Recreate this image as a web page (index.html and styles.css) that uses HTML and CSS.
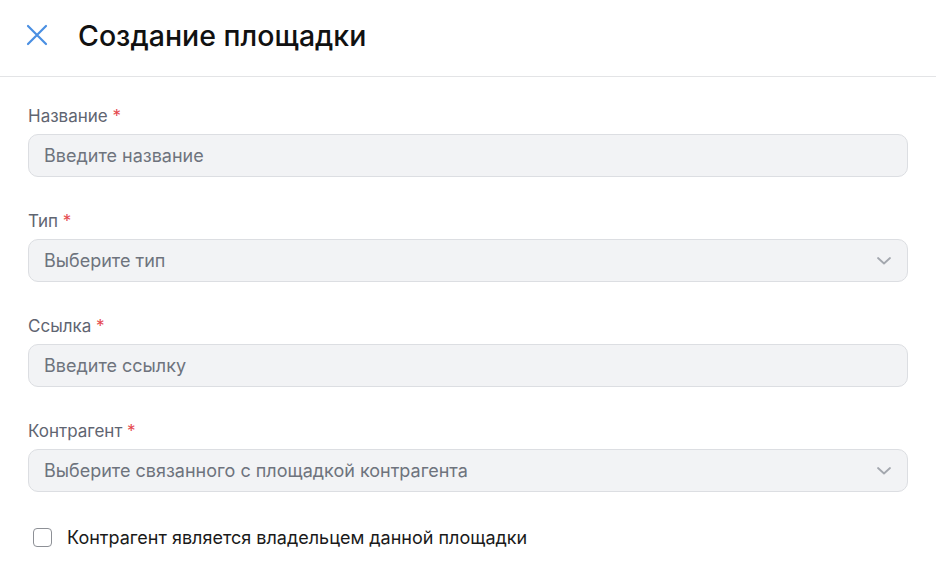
FILE: index.html
```html
<!DOCTYPE html>
<html lang="ru">
<head>
<meta charset="utf-8">
<link rel="stylesheet" href="styles.css">
</head>
<body>
<div class="page">
  <header class="header">
    <button class="close" aria-label="Закрыть">
      <svg width="22" height="22" viewBox="0 0 22 22"><path d="M2 2 L20 20 M20 2 L2 20" stroke="#4a8fe2" stroke-width="2.2" stroke-linecap="round" fill="none"/></svg>
    </button>
    <h1 class="title">Создание площадки</h1>
  </header>
  <main class="form">
    <div class="field">
      <label class="label">Название <span class="req">*</span></label>
      <div class="input"><span class="ph">Введите название</span></div>
    </div>
    <div class="field">
      <label class="label">Тип <span class="req">*</span></label>
      <div class="input select"><span class="ph">Выберите тип</span>
        <svg class="chev" width="16" height="10" viewBox="0 0 16 10"><path d="M2 2 L8 7.5 L14 2" stroke="#a3a7ae" stroke-width="1.8" fill="none" stroke-linecap="round" stroke-linejoin="round"/></svg>
      </div>
    </div>
    <div class="field">
      <label class="label">Ссылка <span class="req">*</span></label>
      <div class="input"><span class="ph">Введите ссылку</span></div>
    </div>
    <div class="field">
      <label class="label">Контрагент <span class="req">*</span></label>
      <div class="input select"><span class="ph">Выберите связанного с площадкой контрагента</span>
        <svg class="chev" width="16" height="10" viewBox="0 0 16 10"><path d="M2 2 L8 7.5 L14 2" stroke="#a3a7ae" stroke-width="1.8" fill="none" stroke-linecap="round" stroke-linejoin="round"/></svg>
      </div>
    </div>
    <label class="check">
      <span class="box"></span>
      <span class="check-text">Контрагент является владельцем данной площадки</span>
    </label>
  </main>
</div>
</body>
</html>
```
FILE: styles.css
```css
* { box-sizing: border-box; }
html, body { margin: 0; padding: 0; background: #fff; }
body { font-family: Inter, "Noto Sans", sans-serif; color: #111; }
.page { width: 936px; height: 586px; overflow: hidden; }
.header {
  height: 77px;
  border-bottom: 1px solid #e3e4e6;
  display: flex;
  align-items: center;
  padding: 0 0 6px 26px;
}
.close { background: none; border: 0; padding: 0; margin: 0; width: 22px; height: 22px; display: flex; }
.title { margin: 0 0 0 30px; font-size: 28.5px; font-weight: 500; letter-spacing: 0; color: #111; }
.form { padding: 29px 28px 0 28px; display: flex; flex-direction: column; }
.field { display: flex; flex-direction: column; margin-bottom: 34px; }
.label { font-size: 17px; line-height: 21px; color: #5f6571; margin-bottom: 7px; }
.req { color: #e5484d; }
.input {
  height: 43px;
  background: #f2f3f5;
  border: 1px solid #dcdee2;
  border-radius: 10px;
  display: flex;
  align-items: center;
  padding: 0 15px;
}
.ph { font-size: 18px; color: #6e737d; }
.select { justify-content: space-between; }
.check { display: flex; align-items: center; margin-top: 1px; padding-left: 5px; }
.box { width: 19px; height: 19px; border: 1.5px solid #8d9096; border-radius: 4px; background: #fff; flex: none; }
.check-text { margin-left: 15px; font-size: 18px; color: #1a1a1a; }
```
